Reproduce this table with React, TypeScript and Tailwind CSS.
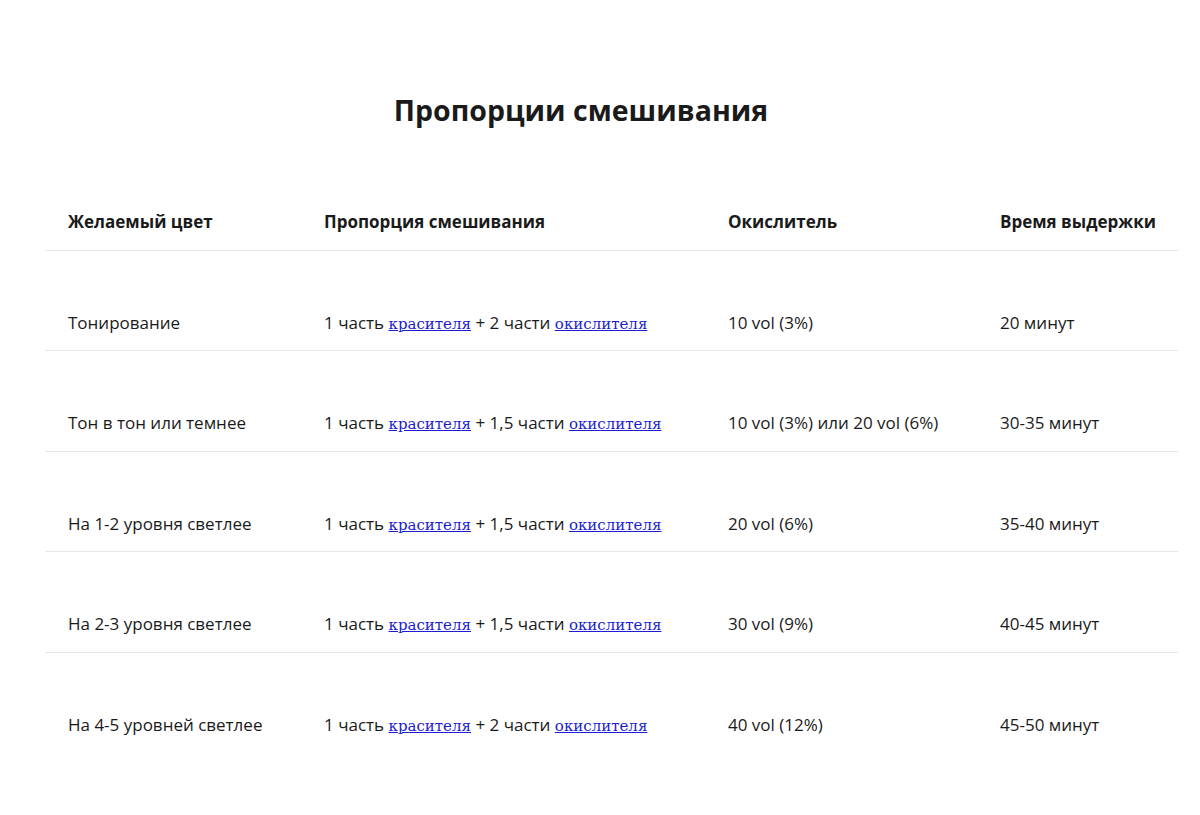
const rows: { color: string; amount: string; ox: string; time: string }[] = [
  { color: 'Тонирование', amount: '2', ox: '10 vol (3%)', time: '20 минут' },
  { color: 'Тон в тон или темнее', amount: '1,5', ox: '10 vol (3%) или 20 vol (6%)', time: '30-35 минут' },
  { color: 'На 1-2 уровня светлее', amount: '1,5', ox: '20 vol (6%)', time: '35-40 минут' },
  { color: 'На 2-3 уровня светлее', amount: '1,5', ox: '30 vol (9%)', time: '40-45 минут' },
  { color: 'На 4-5 уровней светлее', amount: '2', ox: '40 vol (12%)', time: '45-50 минут' }
];

function Link({ children }: { children: string }) {
  return (
    <a href="#" className="text-[#1c1cd0] underline font-['DejaVu_Serif',serif] text-[15px] leading-[20px]">
      {children}
    </a>
  );
}

export default function App() {
  return (
    <div className="min-h-[815px] bg-white text-[#1a1a1a] font-['Open_Sans',sans-serif]">
      <h1 className="pt-[91px] pr-[38px] text-center text-[28.5px] leading-[38px] font-bold">
        Пропорции смешивания
      </h1>
      <table className="mt-[69px] ml-[45px] w-[1133px] border-collapse text-left text-[17px] leading-[24px]">
        <thead>
          <tr className="border-b border-[#e5e7eb]">
            <th className="w-[256px] pl-[23px] pt-[12px] pb-[16px] font-bold">Желаемый цвет</th>
            <th className="w-[404px] pl-[23px] pt-[12px] pb-[16px] font-bold">Пропорция смешивания</th>
            <th className="w-[272px] pl-[23px] pt-[12px] pb-[16px] font-bold">Окислитель</th>
            <th className="w-[201px] pl-[23px] pt-[12px] pb-[16px] font-bold">Время выдержки</th>
          </tr>
        </thead>
        <tbody>
          {rows.map((r, i) => (
            <tr key={r.color} className={i < rows.length - 1 ? 'border-b border-[#e5e7eb]' : ''}>
              <td className="pl-[23px] pt-[60px] pb-[15.4px]">{r.color}</td>
              <td className="pl-[23px] pt-[60px] pb-[15.4px]">
                1 часть <Link>красителя</Link> + {r.amount} части <Link>окислителя</Link>
              </td>
              <td className="pl-[23px] pt-[60px] pb-[15.4px]">{r.ox}</td>
              <td className="pl-[23px] pt-[60px] pb-[15.4px]">{r.time}</td>
            </tr>
          ))}
        </tbody>
      </table>
    </div>
  );
}
